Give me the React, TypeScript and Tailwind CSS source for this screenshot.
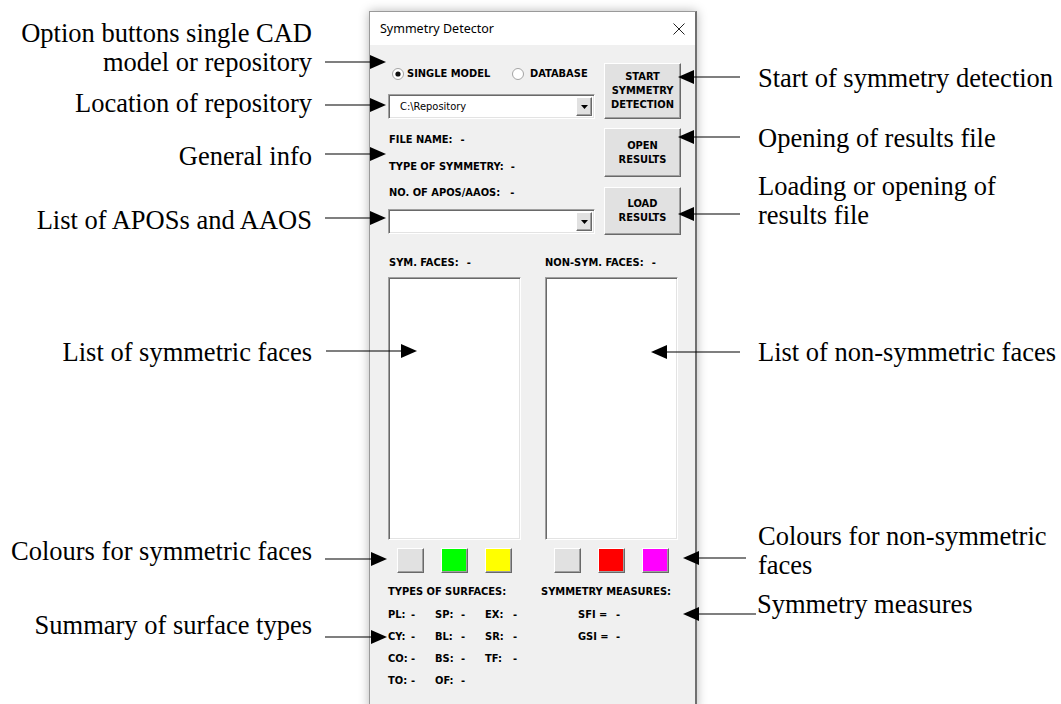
import React from 'react';

const ui = "[font-family:'DejaVu_Sans_Condensed','Liberation_Sans',sans-serif]";
const serif = "[font-family:'Liberation_Serif','Times_New_Roman',serif]";
const note = `absolute whitespace-nowrap text-[26.5px] leading-[29px] text-black ${serif}`;

const raised =
  'border border-t-white border-l-white border-b-[#696969] border-r-[#696969] shadow-[inset_-1px_-1px_0_#a0a0a0]';
const sunken =
  'border border-t-[#a0a0a0] border-l-[#a0a0a0] border-b-white border-r-white shadow-[inset_1px_1px_0_#696969,inset_-1px_-1px_0_#e3e3e3]';

function B({ children, className = '' }: { children: React.ReactNode; className?: string }) {
  return <span className={`text-[11px] font-bold leading-[14px] text-black ${className}`}>{children}</span>;
}

function Radio({ checked }: { checked?: boolean }) {
  return (
    <svg width="12" height="12" viewBox="0 0 12 12" className="shrink-0">
      <circle cx="6" cy="6" r="5.5" fill="#fff" stroke="#a3a3a3" />
      {checked && <circle cx="6" cy="6" r="2.6" fill="#111" />}
    </svg>
  );
}

function Combo({ value }: { value?: string }) {
  return (
    <div className={`flex h-[25px] w-[207px] items-center bg-white ${sunken}`}>
      <span className="flex-1 pl-[11px] text-[11px] text-black">{value}</span>
      <div className={`mr-[2px] flex h-[19px] w-[16px] items-center justify-center bg-[#e1e1e1] ${raised}`}>
        <svg width="7" height="4" viewBox="0 0 7 4">
          <path d="M0 0h7L3.5 4z" fill="#000" />
        </svg>
      </div>
    </div>
  );
}

function Btn({ lines, className }: { lines: string[]; className: string }) {
  return (
    <div className={`flex w-[77px] flex-col items-center justify-center bg-[#e1e1e1] ${raised} ${className}`}>
      {lines.map(l => (
        <B key={l}>{l}</B>
      ))}
    </div>
  );
}

function Swatch({ color }: { color: string }) {
  return <div className={`h-[25px] w-[27px] ${raised} ${color}`} />;
}

function Arrow({ x1, x2, y }: { x1: number; x2: number; y: number }) {
  const d = x2 > x1 ? -16 : 16;
  return (
    <g>
      <line x1={x1} y1={y} x2={x2 + d} y2={y} stroke="#000" strokeWidth="1.2" />
      <polygon points={`${x2 + d},${y - 7} ${x2},${y} ${x2 + d},${y + 7}`} fill="#000" />
    </g>
  );
}

const surfaces = [
  ['PL', 'SP', 'EX'],
  ['CY', 'BL', 'SR'],
  ['CO', 'BS', 'TF'],
  ['TO', 'OF'],
];

export default function App() {
  return (
    <div className="relative h-[704px] w-[1061px] overflow-hidden bg-white">
      <div
        className={`ml-[369px] mt-[11px] flex h-[700px] w-[328px] flex-col border-l border-t border-[#9a9a9a] border-r-2 border-r-[#707070] text-[11px] leading-[14px] shadow-[0_0_10px_rgba(0,0,0,0.28)] ${ui}`}
      >
        <div className="flex h-[33px] shrink-0 items-center justify-between bg-white pl-[10px] pr-[10px]">
          <span className="text-[12.5px] text-black [font-family:'Noto_Sans','Open_Sans',sans-serif]">
            Symmetry Detector
          </span>
          <svg width="12" height="12" viewBox="0 0 12 12">
            <path d="M0.5 0.5L11.5 11.5M11.5 0.5L0.5 11.5" stroke="#222" strokeWidth="1" />
          </svg>
        </div>

        <div className="flex flex-1 flex-col bg-[#f0f0f0] pl-[18px]">
          <div className="flex items-start">
            <div className="flex w-[207px] shrink-0 flex-col">
              <div className="mt-[22px] flex h-[14px] items-center">
                <div className="ml-[4px] flex w-[120px] items-center gap-[3px]">
                  <Radio checked />
                  <B>SINGLE MODEL</B>
                </div>
                <div className="flex items-center gap-[6px]">
                  <Radio />
                  <B>DATABASE</B>
                </div>
              </div>
              <div className="mt-[13px]">
                <Combo value="C:\Repository" />
              </div>
              <div className="mt-[14px] flex flex-col gap-[12.5px] pl-[1px]">
                <div className="h-[14px]">
                  <B>FILE NAME:</B>
                  <B className="ml-[8px]">-</B>
                </div>
                <div className="h-[14px]">
                  <B>TYPE OF SYMMETRY:</B>
                  <B className="ml-[7px]">-</B>
                </div>
                <div className="h-[14px]">
                  <B>NO. OF APOS/AAOS:</B>
                  <B className="ml-[10px]">-</B>
                </div>
              </div>
              <div className="mt-[9px]">
                <Combo />
              </div>
            </div>
            <div className="ml-[9px] mt-[18px] flex shrink-0 flex-col">
              <Btn lines={['START', 'SYMMETRY', 'DETECTION']} className="h-[56px]" />
              <Btn lines={['OPEN', 'RESULTS']} className="mt-[9px] h-[49px]" />
              <Btn lines={['LOAD', 'RESULTS']} className="mt-[10px] h-[48px]" />
            </div>
          </div>

          <div className="mt-[21px] flex h-[14px] gap-[24px]">
            <div className="w-[133px] pl-[1px]">
              <B>SYM. FACES:</B>
              <B className="ml-[8px]">-</B>
            </div>
            <div className="w-[133px]">
              <B>NON-SYM. FACES:</B>
              <B className="ml-[8px]">-</B>
            </div>
          </div>

          <div className="mt-[7px] flex gap-[24px]">
            <div className={`h-[263px] w-[133px] bg-white ${sunken}`} />
            <div className={`h-[263px] w-[133px] bg-white ${sunken}`} />
          </div>

          <div className="mt-[8px] flex gap-[24px]">
            <div className="flex w-[133px] justify-center gap-[17px]">
              <Swatch color="bg-[#e1e1e1]" />
              <Swatch color="bg-[#00ff00]" />
              <Swatch color="bg-[#ffff00]" />
            </div>
            <div className="flex w-[133px] justify-center gap-[17px]">
              <Swatch color="bg-[#e1e1e1]" />
              <Swatch color="bg-[#ff0000]" />
              <Swatch color="bg-[#ff00ff]" />
            </div>
          </div>

          <div className="mt-[12px] flex">
            <div className="flex w-[153px] shrink-0 flex-col">
              <div className="h-[14px]">
                <B>TYPES OF SURFACES:</B>
              </div>
              <div className="mt-[5px] flex flex-col">
                {surfaces.map(row => (
                  <div key={row[0]} className="flex h-[22px] items-center">
                    <div className="flex w-[47px]">
                      <B className="w-[23px]">{row[0]}:</B>
                      <B>-</B>
                    </div>
                    <div className="flex w-[50px]">
                      <B className="w-[26px]">{row[1]}:</B>
                      <B>-</B>
                    </div>
                    {row[2] && (
                      <div className="flex">
                        <B className="w-[28px]">{row[2]}:</B>
                        <B>-</B>
                      </div>
                    )}
                  </div>
                ))}
              </div>
            </div>
            <div className="flex flex-col">
              <div className="h-[14px]">
                <B>SYMMETRY MEASURES:</B>
              </div>
              <div className="mt-[5px] flex flex-col pl-[37px]">
                <div className="flex h-[22px] items-center">
                  <B className="w-[38px]">SFI =</B>
                  <B>-</B>
                </div>
                <div className="flex h-[22px] items-center">
                  <B className="w-[38px]">GSI =</B>
                  <B>-</B>
                </div>
              </div>
            </div>
          </div>
        </div>
      </div>

      <div className={`${note} right-[749px] top-[19px] text-right`}>
        Option buttons single CAD
        <br />
        model or repository
      </div>
      <div className={`${note} right-[749px] top-[89px] text-right`}>Location of repository</div>
      <div className={`${note} right-[749px] top-[142px] text-right`}>General info</div>
      <div className={`${note} right-[749px] top-[206px] text-right`}>List of APOSs and AAOS</div>
      <div className={`${note} right-[749px] top-[338px] text-right`}>List of symmetric faces</div>
      <div className={`${note} right-[749px] top-[537px] text-right`}>Colours for symmetric faces</div>
      <div className={`${note} right-[749px] top-[611px] text-right`}>Summary of surface types</div>

      <div className={`${note} left-[758px] top-[64px]`}>Start of symmetry detection</div>
      <div className={`${note} left-[758px] top-[124px]`}>Opening of results file</div>
      <div className={`${note} left-[758px] top-[172px]`}>
        Loading or opening of
        <br />
        results file
      </div>
      <div className={`${note} left-[758px] top-[338px]`}>List of non-symmetric faces</div>
      <div className={`${note} left-[758px] top-[522px]`}>
        Colours for non-symmetric
        <br />
        faces
      </div>
      <div className={`${note} left-[757px] top-[590px]`}>Symmetry measures</div>

      <svg className="pointer-events-none absolute left-0 top-0" width="1061" height="704">
        <Arrow x1={325} x2={386} y={62} />
        <Arrow x1={325} x2={386} y={105} />
        <Arrow x1={325} x2={386} y={154} />
        <Arrow x1={325} x2={386} y={218} />
        <Arrow x1={326} x2={417} y={351} />
        <Arrow x1={325} x2={387} y={559} />
        <Arrow x1={325} x2={387} y={637} />
        <Arrow x1={740} x2={678} y={77} />
        <Arrow x1={740} x2={678} y={137} />
        <Arrow x1={740} x2={678} y={214} />
        <Arrow x1={740} x2={651} y={352} />
        <Arrow x1={746} x2={683} y={558} />
        <Arrow x1={756} x2={683} y={614} />
      </svg>
    </div>
  );
}
